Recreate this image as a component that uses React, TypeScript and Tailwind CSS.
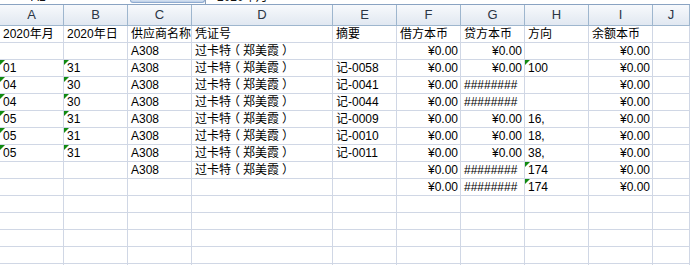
import type { ReactNode } from 'react'

const COLS = ['A', 'B', 'C', 'D', 'E', 'F', 'G', 'H', 'I', 'J']

type Cell = { v?: ReactNode; right?: boolean; flag?: boolean }

const L = (v: ReactNode, flag = false): Cell => ({ v, flag })
const R = (v: string): Cell => ({ v, right: true })
const E: Cell = {}

const MONEY = '¥0.00'
const HASH = '########'

// full-width brackets sit centred in their em box, as in the sheet's font
const bracket = 'inline-block px-[3px] [font-feature-settings:"halt"]'
const NAME = (
  <>
    过卡特
    <span className={bracket}>（</span>
    郑美霞
    <span className={bracket}>）</span>
  </>
)

const rows: Cell[][] = [
  [L('2020年月'), L('2020年日'), L('供应商名称'), L('凭证号'), L('摘要'), L('借方本币'), L('贷方本币'), L('方向'), L('余额本币'), E],
  [E, E, L('A308'), L(NAME), E, R(MONEY), R(MONEY), E, R(MONEY), E],
  [L('01', true), L('31', true), L('A308'), L(NAME), L('记-0058'), R(MONEY), R(MONEY), L('100', true), R(MONEY), E],
  [L('04', true), L('30', true), L('A308'), L(NAME), L('记-0041'), R(MONEY), L(HASH), E, R(MONEY), E],
  [L('04', true), L('30', true), L('A308'), L(NAME), L('记-0044'), R(MONEY), L(HASH), E, R(MONEY), E],
  [L('05', true), L('31', true), L('A308'), L(NAME), L('记-0009'), R(MONEY), R(MONEY), L('16,'), R(MONEY), E],
  [L('05', true), L('31', true), L('A308'), L(NAME), L('记-0010'), R(MONEY), R(MONEY), L('18,'), R(MONEY), E],
  [L('05', true), L('31', true), L('A308'), L(NAME), L('记-0011'), R(MONEY), R(MONEY), L('38,'), R(MONEY), E],
  [E, E, L('A308'), L(NAME), E, R(MONEY), L(HASH), L('174', true), R(MONEY), E],
  [E, E, E, E, E, R(MONEY), L(HASH), L('174', true), R(MONEY), E],
  ...Array.from({ length: 5 }, () => Array.from({ length: 10 }, () => E)),
]

const grid =
  'grid grid-cols-[64px_64px_64px_141px_64px_64px_64px_64px_64px_1fr]'

// bottom edge of the name box / formula bar, mostly scrolled away
function FormulaStrip(): JSX.Element {
  return (
    <div className="flex h-[4px] overflow-hidden bg-white">
      <div className="w-[31px]" />
      <div className="h-[4px] w-[20px] overflow-hidden">
        <div className="-mt-[10px] text-[12px] leading-[14px] text-[#111]">A1</div>
      </div>
      <div className="w-[79px]" />
      <div className="h-[3px] w-[75px] rounded-b-[4px] border-x border-b border-[#8eaad0] bg-gradient-to-b from-[#d8e4f3] to-[#b9cce6]" />
      <div className="h-[4px] w-px bg-[#8c9fb8]" />
      <div className="ml-[11px] h-[4px] overflow-hidden">
        <div className="-mt-[10px] text-[12px] leading-[14px] text-[#111]">2020年月</div>
      </div>
    </div>
  )
}

function HeaderRow(): JSX.Element {
  return (
    <div className={`${grid} h-[21px]`}>
      {COLS.map((c) => (
        <div
          key={c}
          className="flex items-center justify-center border-r border-b border-[#9eb6ce] bg-gradient-to-b from-[#f7f9fc] to-[#e1e8f1] text-[13px] text-[#2b3645]"
        >
          {c}
        </div>
      ))}
    </div>
  )
}

function DataCell({ cell }: { cell: Cell }): JSX.Element {
  return (
    <div
      className={`relative flex h-[17px] items-center overflow-hidden whitespace-nowrap border-r border-b border-[#d0d7e5] text-[12px] leading-none text-black ${
        cell.right ? 'justify-end pr-[2px]' : 'justify-start pl-[3px]'
      }`}
    >
      {cell.flag && (
        <span className="absolute top-0 left-0 h-0 w-0 border-t-[5px] border-r-[5px] border-t-[#118a11] border-r-transparent" />
      )}
      <span className="whitespace-nowrap">{cell.v}</span>
    </div>
  )
}

export default function App(): JSX.Element {
  return (
    <div
      className="h-[265px] w-[690px] overflow-hidden bg-white"
      style={{ fontFamily: '"Liberation Sans", "Noto Sans CJK SC", sans-serif' }}
    >
      <FormulaStrip />
      <div className="h-px bg-[#8aa3c2]" />
      <HeaderRow />
      {rows.map((row, i) => (
        <div className={grid} key={i}>
          {row.map((cell, j) => (
            <DataCell cell={cell} key={j} />
          ))}
        </div>
      ))}
    </div>
  )
}
